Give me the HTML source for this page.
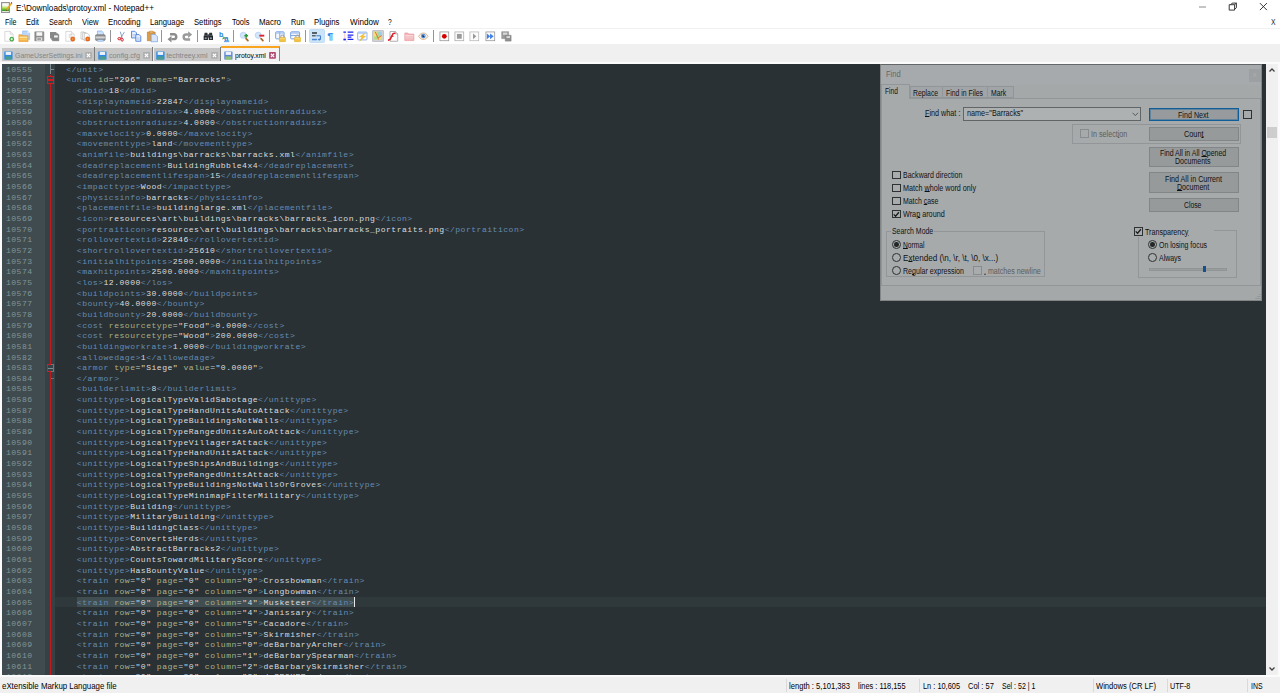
<!DOCTYPE html>
<html><head><meta charset="utf-8"><title>E:\Downloads\protoy.xml - Notepad++</title>
<style>
*{box-sizing:border-box;margin:0;padding:0}
html,body{width:1280px;height:693px;overflow:hidden;background:#f0f0f0;font-family:"Liberation Sans",sans-serif;font-size:8px;color:#000}
i{font-style:normal;display:block}
.T{position:absolute;line-height:10px;white-space:pre;font-family:"Liberation Sans",sans-serif}
.T u{text-decoration:underline;text-decoration-thickness:.7px;text-underline-offset:.2px}
.ic{position:absolute;overflow:visible}
.bx{position:absolute}
#titlebar{position:absolute;left:0;top:0;width:1280px;height:15px;background:#fff}
#menubar{position:absolute;left:0;top:15px;width:1280px;height:13px;background:#fff}
#toolbar{position:absolute;left:0;top:27.6px;width:1280px;height:16.8px;background:#fff;border-top:1px solid #f1f1f1}
.tsep{position:absolute;top:30.2px;width:1px;height:11.4px;background:#949494}
.tbhl{position:absolute}
.tab{position:absolute;top:47.8px;height:12.9px;background:#c6c6c6}
.tabsep{position:absolute;top:46.8px;width:1px;height:14.6px;background:#7c7c7c}
.atab{position:absolute;left:221.2px;top:46.3px;width:58.8px;height:15.2px;background:#f3f3f3;border-top:2.6px solid #faa51f;border-right:1.2px solid #8a8a8a}
#edframe{position:absolute;left:0;top:62px;width:1280px;height:615px;background:#fbfbfb}
#editor{position:absolute;left:2px;top:63.6px;width:1264px;height:611.2px;background:#293134;overflow:hidden}
#lnmargin{position:absolute;left:0;top:0;width:43.4px;height:100%;background:#3f4b4e}
#foldmargin{position:absolute;left:43.4px;top:0;width:9.8px;height:100%;background:#354144}
#nums{position:absolute;left:0;top:.4px;width:43px;font-family:"Liberation Mono",monospace;font-size:8.1px;letter-spacing:.4733px;line-height:10.6667px;color:#81969a}
#nums div{height:10.6667px;padding-left:3.9px;white-space:pre}
#code{position:absolute;left:53px;top:.4px;width:1211px;font-family:"Liberation Mono",monospace;font-size:8.1px;letter-spacing:.4733px;line-height:10.6667px;color:#e0e2e4}
#code .ln{height:10.6667px;padding-left:.5px;white-space:pre;position:relative}
#code .cur{background:#2f393c}
.t{color:#678cb1}.a{color:#adb083}.s{color:#d9dcde}.v{color:#d9dcde}.e{color:#c4c9cb}
.tx{position:relative;top:.8px}
.selbg{position:absolute;left:21.5px;top:0;width:277.3px;height:10.6667px;background:#404e52}
.caret{position:absolute;left:298.8px;top:0;width:1px;height:10.6667px;background:#e8e8e8}
.fm{position:absolute}
#vscroll{position:absolute;left:1265.8px;top:63.6px;width:12px;height:611.2px;background:#f0f0f0}
#vthumb{position:absolute;left:1.3px;top:63.2px;width:9.6px;height:10.8px;background:#cdcdcd}
#statusbar{position:absolute;left:0;top:677px;width:1280px;height:16px;background:#f0f0f0}
.ssep{position:absolute;top:679px;width:1px;height:13px;background:#d9d9d9}
#dlg{position:absolute;left:0;top:0;width:1280px;height:693px;opacity:.625}
</style></head><body>
<div id="titlebar">
<svg class="ic" style="left:0;top:0;width:13px;height:14px" viewBox="0 0 13 14"><defs><linearGradient id="g1" x1="0" y1="0" x2="0" y2="1"><stop offset="0" stop-color="#ffffff"/><stop offset=".32" stop-color="#f4f8ea"/><stop offset=".55" stop-color="#b4e04a"/><stop offset=".8" stop-color="#35a528"/><stop offset=".86" stop-color="#1f8f1c"/><stop offset=".9" stop-color="#f4f8f0"/><stop offset="1" stop-color="#ffffff"/></linearGradient></defs><rect x="1.6" y="2.6" width="7.8" height="9.8" fill="url(#g1)" stroke="#8e8e8e" stroke-width="1.1"/><path d="M10.9 2.9l1 .8-4.6 6.6-1.4.8.3-1.6z" fill="#f1a81c" stroke="#e0951a" stroke-width=".3"/><path d="M6.2 9.5l-.3 1.6 1.4-.8z" fill="#4a3a20"/><path d="M10.9 2.9l1 .8.5-.8-.9-.8z" fill="#9a0c10"/></svg>
<span class="T" style="left:15.70px;top:2px;line-height:12px;font-size:8.3px;color:#000;transform:scaleX(0.9886);transform-origin:0 50%;">E:\Downloads\protoy.xml - Notepad++</span>
<svg class="ic" style="left:1196px;top:0;width:80px;height:15px" viewBox="0 0 80 15"><path d="M3 7h7" stroke="#8a8a8a" stroke-width="1"/><path d="M33.2 4.7h5.4v5.4h-5.4zM34.8 4.7l1.4-1.6h4.2v4.6l-1.8 1.6M40.4 3.1l-1.8 1.6" fill="none" stroke="#222" stroke-width=".9"/><path d="M63.9 3.1l7 7M70.9 3.1l-7 7" stroke="#222" stroke-width=".9"/></svg>
</div>
<div id="menubar"></div>
<span class="T" style="left:5.10px;top:16px;line-height:12px;font-size:8.4px;color:#000;transform:scaleX(0.8444);transform-origin:0 50%;">File</span><span class="T" style="left:26.20px;top:16px;line-height:12px;font-size:8.4px;color:#000;transform:scaleX(0.8935);transform-origin:0 50%;">Edit</span><span class="T" style="left:48.85px;top:16px;line-height:12px;font-size:8.4px;color:#000;transform:scaleX(0.8720);transform-origin:0 50%;">Search</span><span class="T" style="left:81.60px;top:16px;line-height:12px;font-size:8.4px;color:#000;transform:scaleX(0.9159);transform-origin:0 50%;">View</span><span class="T" style="left:107.90px;top:16px;line-height:12px;font-size:8.4px;color:#000;transform:scaleX(0.9302);transform-origin:0 50%;">Encoding</span><span class="T" style="left:150.30px;top:16px;line-height:12px;font-size:8.4px;color:#000;transform:scaleX(0.9177);transform-origin:0 50%;">Language</span><span class="T" style="left:194.20px;top:16px;line-height:12px;font-size:8.4px;color:#000;transform:scaleX(0.9152);transform-origin:0 50%;">Settings</span><span class="T" style="left:231.80px;top:16px;line-height:12px;font-size:8.4px;color:#000;transform:scaleX(0.8895);transform-origin:0 50%;">Tools</span><span class="T" style="left:258.90px;top:16px;line-height:12px;font-size:8.4px;color:#000;transform:scaleX(0.9450);transform-origin:0 50%;">Macro</span><span class="T" style="left:290.90px;top:16px;line-height:12px;font-size:8.4px;color:#000;transform:scaleX(0.8846);transform-origin:0 50%;">Run</span><span class="T" style="left:314.40px;top:16px;line-height:12px;font-size:8.4px;color:#000;transform:scaleX(0.9283);transform-origin:0 50%;">Plugins</span><span class="T" style="left:350.00px;top:16px;line-height:12px;font-size:8.4px;color:#000;transform:scaleX(0.9665);transform-origin:0 50%;">Window</span><span class="T" style="left:387.90px;top:16px;line-height:12px;font-size:8.4px;color:#000;transform:scaleX(0.7920);transform-origin:0 50%;">?</span><span class="T" style="left:1270.80px;top:15px;line-height:13px;font-size:9.4px;color:#2a2a2a;transform:scaleX(.72);transform-origin:0 50%">X</span>
<div id="toolbar"></div>
<i class="tbhl" style="left:309.2px;top:28.8px;width:15.6px;height:14px;background:#cce4f7;border:1px solid #c2def5;border-radius:1.5px"></i><i class="tbhl" style="left:372.2px;top:30.1px;width:11.6px;height:11.5px;background:#d2d2d2;border:1px solid #c4c4d0;border-radius:1px"></i><svg class="ic" style="left:3.77px;top:30.60px;width:10.667px;height:10.667px" viewBox="0 0 16 16"><path d="M1.2 .6h8.3l4.3 4.3v10.5h-12.6z" fill="#fdfdfd" stroke="#c9c9c9" stroke-width="1"/><path d="M9.5 .6v4.3h4.3" fill="#f1f1f1" stroke="#c9c9c9" stroke-width=".8"/><circle cx="11.6" cy="12.2" r="3.1" fill="#3fae3a" stroke="#2c8a2a" stroke-width=".6"/><path d="M11.6 10.4v3.6M9.8 12.2h3.6" stroke="#fff" stroke-width="1.3"/></svg><svg class="ic" style="left:18.87px;top:30.60px;width:10.667px;height:10.667px" viewBox="0 0 16 16"><path d="M5.4 0h7.2l3.4 3.4v9.2h-10.6z" fill="#bcd6f8" stroke="#8ab4ee" stroke-width=".9"/><path d="M12.6 0v3.4h3.4" fill="#e6f0fc"/><path d="M-.2 5.6h4.6l1 1.6h8.2v8.6h-13.8z" fill="#f5b54a" stroke="#e8962a" stroke-width=".9"/><path d="M.8 9.4h11.8" stroke="#fde9a6" stroke-width="1.8"/><path d="M.8 12.2h11.8" stroke="#fbd36c" stroke-width="1.6"/></svg><svg class="ic" style="left:34.07px;top:30.60px;width:10.667px;height:10.667px" viewBox="0 0 16 16"><path d="M1.2 1.2h13.6v13.6h-13.6z" fill="#8e8e8e" stroke="#7c7c7c" stroke-width=".8"/><rect x="3.6" y="1.8" width="8.8" height="5.4" fill="#f6f6f6"/><rect x="3.6" y="9.6" width="8.8" height="5" fill="#e4e4e4"/><rect x="5" y="11" width="5.5" height="2.2" fill="#8e8e8e"/></svg><svg class="ic" style="left:49.27px;top:30.60px;width:10.667px;height:10.667px" viewBox="0 0 16 16"><path d="M1.5 1.5h9.5v9.5h-9.5z" fill="#8a8a8a"/><path d="M3.5 3.5h9.5v9.5h-9.5z" fill="#9a9a9a" stroke="#7a7a7a" stroke-width=".6"/><path d="M5.2 5.2h9.6v9.6h-9.6z" fill="#858585" stroke="#747474" stroke-width=".6"/><rect x="7.6" y="6.6" width="5.6" height="3.2" fill="#f4f4f4"/></svg><svg class="ic" style="left:64.67px;top:30.60px;width:10.667px;height:10.667px" viewBox="0 0 16 16"><path d="M1.2 .6h8.3l4.3 4.3v10.5h-12.6z" fill="#fdfdfd" stroke="#c9c9c9" stroke-width="1"/><path d="M9.5 .6v4.3h4.3" fill="#f1f1f1" stroke="#c9c9c9" stroke-width=".8"/><path d="M5.5 5.5h5M5.5 7.5h5M5.5 9.5h3" stroke="#c9c9c9" stroke-width="1"/><circle cx="11.6" cy="12" r="3.3" fill="#ea6a1b" stroke="#d4540f" stroke-width=".5"/><circle cx="11.6" cy="12" r="1.2" fill="#f6a86c"/></svg><svg class="ic" style="left:79.97px;top:30.60px;width:10.667px;height:10.667px" viewBox="0 0 16 16"><path d="M1.5 1.5h5l2.5 2.5v8h-7.5z" fill="#fdfdfd" stroke="#b0b0b0" stroke-width=".9"/><path d="M4 2.5h5l2.5 2.5v8h-7.5z" fill="#fdfdfd" stroke="#b0b0b0" stroke-width=".9"/><path d="M6.5 3.5h5l2.5 2.5v8.5h-7.5z" fill="#fdfdfd" stroke="#b0b0b0" stroke-width=".9"/><circle cx="11.6" cy="12" r="3.3" fill="#ea6a1b" stroke="#d4540f" stroke-width=".5"/><circle cx="11.6" cy="12" r="1.2" fill="#f6a86c"/></svg><svg class="ic" style="left:95.27px;top:30.60px;width:10.667px;height:10.667px" viewBox="0 0 16 16"><defs><linearGradient id="pg" x1="0" y1="0" x2="0" y2="1"><stop offset="0" stop-color="#6e6e6e"/><stop offset=".45" stop-color="#d8d8d8"/><stop offset="1" stop-color="#707070"/></linearGradient></defs><path d="M3.6 0h6.4l2.6 2.6v4h-9z" fill="#cfe2fa" stroke="#6fa0e6" stroke-width=".9"/><rect x=".6" y="5.6" width="14.8" height="8.6" rx="1.6" fill="url(#pg)" stroke="#6a6a6a" stroke-width=".7"/><path d="M3.8 13.4h8.6v2.4h-8.6z" fill="#cfe2fa" stroke="#7faae6" stroke-width=".7"/></svg><svg class="ic" style="left:115.87px;top:30.60px;width:10.667px;height:10.667px" viewBox="0 0 16 16"><path d="M6.4 1l2.6 8.4M12.6 1.4l-4.8 8" stroke="#8aa6cc" stroke-width="1.5" fill="none"/><ellipse cx="4.8" cy="11.6" rx="2" ry="1.7" fill="none" stroke="#d0222b" stroke-width="1.5"/><ellipse cx="9.2" cy="13.2" rx="1.8" ry="2" fill="none" stroke="#d0222b" stroke-width="1.5"/><path d="M6.4 10.6l1.8-1.4M9 11.2l-.4-1.8" stroke="#d0222b" stroke-width="1.3"/></svg><svg class="ic" style="left:131.07px;top:30.60px;width:10.667px;height:10.667px" viewBox="0 0 16 16"><path d="M0.8 0.4h5l2.5 2.5v7.5h-7.5z" fill="#e6effc" stroke="#3f77d8" stroke-width="1.25"/><path d="M2.4 5.4h4M2.4 7.4h4" stroke="#8fb2ec" stroke-width=".8"/><path d="M7.2 5.4h5l2.5 2.5v7.5h-7.5z" fill="#e6effc" stroke="#3f77d8" stroke-width="1.25"/><path d="M8.8 10.4h4M8.8 12.4h4" stroke="#8fb2ec" stroke-width=".8"/></svg><svg class="ic" style="left:146.87px;top:30.60px;width:10.667px;height:10.667px" viewBox="0 0 16 16"><path d="M.6 1.6h11.6v13h-11.6z" fill="#dc9c4c" stroke="#c07e2c" stroke-width="1"/><path d="M3.6 .2h5.6v2.8h-5.6z" fill="#f0c27c" stroke="#c07e2c" stroke-width=".8"/><path d="M6.2 5h6l3.6 3.6v7.6h-9.6z" fill="#d6e6fb" stroke="#6f9ce4" stroke-width="1"/></svg><svg class="ic" style="left:167.07px;top:30.60px;width:10.667px;height:10.667px" viewBox="0 0 16 16"><path d="M4.6 4.8h5.6a3.7 3.7 0 0 1 0 7.4h-3.6" fill="none" stroke="#8c8c8c" stroke-width="3.7"/><path d="M.8 12.2l6-5v10z" fill="#8c8c8c"/></svg><svg class="ic" style="left:182.47px;top:30.60px;width:10.667px;height:10.667px" viewBox="0 0 16 16"><path d="M9.6 5.4h-3.4a3.7 3.7 0 0 0 0 7.4h6" fill="none" stroke="#9a9a9a" stroke-width="3.7"/><path d="M15.2 5.4l-6-5v10z" fill="#9a9a9a"/></svg><svg class="ic" style="left:203.07px;top:30.60px;width:10.667px;height:10.667px" viewBox="0 0 16 16"><path d="M2.5 2.5h4l.8 4.5h-5.6z" fill="#2e3236"/><path d="M9.5 2.5h4l.8 4.5h-5.6z" fill="#2e3236"/><path d="M1 7h6.4v6.5h-6.4z" fill="#23272b"/><path d="M8.6 7h6.4v6.5h-6.4z" fill="#23272b"/><rect x="6.8" y="5" width="2.4" height="5" fill="#3b4046"/><rect x="2.6" y="9.6" width="3" height="2.6" fill="#8d949c"/><rect x="10.4" y="9.6" width="3" height="2.6" fill="#8d949c"/></svg><svg class="ic" style="left:218.57px;top:30.60px;width:10.667px;height:10.667px" viewBox="0 0 16 16"><text x="0" y="8.4" font-family="Liberation Sans,sans-serif" font-weight="bold" font-size="10.5" fill="#2f7de0">b</text><text x="8" y="15.2" font-family="Liberation Sans,sans-serif" font-weight="bold" font-size="11.5" fill="#2f7de0">a</text><path d="M5.5 8.4l3 2-3.5 1.8" fill="none" stroke="#3aa04a" stroke-width="1.6"/><path d="M7.5 16h8" stroke="#2f7de0" stroke-width="1.2"/></svg><svg class="ic" style="left:239.27px;top:30.60px;width:10.667px;height:10.667px" viewBox="0 0 16 16"><circle cx="6.4" cy="6.4" r="4.6" fill="#d4e6fa" stroke="#a9c8ee" stroke-width="1"/><path d="M10.6 11.4l2.8 3" stroke="#a8682c" stroke-width="2.6" stroke-linecap="round"/><path d="M10.8 4.4v5.6M8 7.2h5.6" stroke="#2e9c35" stroke-width="2.4"/></svg><svg class="ic" style="left:254.47px;top:30.60px;width:10.667px;height:10.667px" viewBox="0 0 16 16"><circle cx="6.4" cy="6.4" r="4.6" fill="#d4e6fa" stroke="#a9c8ee" stroke-width="1"/><path d="M10.6 11.4l2.8 3" stroke="#a8682c" stroke-width="2.6" stroke-linecap="round"/><path d="M8 7h7.4" stroke="#e0202a" stroke-width="2.8"/></svg><svg class="ic" style="left:275.27px;top:30.60px;width:10.667px;height:10.667px" viewBox="0 0 16 16"><rect x="1" y="1.2" width="12.6" height="10.6" rx="1.2" fill="#f4f8fe" stroke="#6f9be2" stroke-width="1.4"/><path d="M7.2 1.5v10" stroke="#6f9be2" stroke-width="1.3"/><path d="M1.5 3h11.6" stroke="#9dbcee" stroke-width="1.6"/><path d="M8.8 10v-1.6a2.4 2.4 0 0 1 4.8 0v1.6" fill="none" stroke="#a4a4a4" stroke-width="1.6"/><rect x="6.6" y="9.6" width="9.2" height="6.4" rx=".8" fill="#f2c23e" stroke="#dfaa28" stroke-width=".8"/><path d="M7.2 11.6h8" stroke="#fbe08a" stroke-width="1.2"/></svg><svg class="ic" style="left:290.47px;top:30.60px;width:10.667px;height:10.667px" viewBox="0 0 16 16"><rect x="1" y="1.2" width="13.4" height="10.6" rx="1.2" fill="#f4f8fe" stroke="#6f9be2" stroke-width="1.4"/><path d="M1.5 6.8h12.6" stroke="#6f9be2" stroke-width="1.3"/><path d="M1.5 3h12.4" stroke="#9dbcee" stroke-width="1.8"/><path d="M8.8 10v-1.6a2.4 2.4 0 0 1 4.8 0v1.6" fill="none" stroke="#a4a4a4" stroke-width="1.6"/><rect x="6.6" y="9.6" width="9.2" height="6.4" rx=".8" fill="#f2c23e" stroke="#dfaa28" stroke-width=".8"/><path d="M7.2 11.6h8" stroke="#fbe08a" stroke-width="1.2"/></svg><svg class="ic" style="left:311.47px;top:31.40px;width:10.667px;height:10.667px" viewBox="0 0 16 16"><path d="M1.5 3h7.5" stroke="#2a2f36" stroke-width="2.2"/><path d="M1.5 7.2h5.5" stroke="#2a2f36" stroke-width="1.6"/><path d="M8 7.2h6.2v5.6h-2.4" fill="none" stroke="#3f78c8" stroke-width="1.5"/><path d="M12.8 10.6l-2.6 2.2 2.6 2.2z" fill="#3f78c8"/><path d="M1.5 12.8h7.5" stroke="#4a86d8" stroke-width="2.2"/></svg><svg class="ic" style="left:326.27px;top:30.60px;width:10.667px;height:10.667px" viewBox="0 0 16 16"><text x="1.6" y="11.8" font-family="Liberation Sans,sans-serif" font-weight="bold" font-size="13.5" fill="#3a86ea" transform="scale(1.2 1)">¶</text></svg><svg class="ic" style="left:342.57px;top:30.60px;width:10.667px;height:10.667px" viewBox="0 0 16 16"><path d="M2.6 3.2v8" stroke="#f8baba" stroke-width="1.2"/><path d="M.6 1.8h3.8M7 1.8h8.6M7 6.3h8.6M7 9.3h5.6M7 12.6h8.6" stroke="#1c22f2" stroke-width="1.8"/><path d="M.6 12.8h3.8" stroke="#1c22f2" stroke-width="2.6"/><path d="M4.6 15.6h2" stroke="#b8bcf8" stroke-width="1"/></svg><svg class="ic" style="left:356.87px;top:30.60px;width:10.667px;height:10.667px" viewBox="0 0 16 16"><rect x="1" y="1.6" width="14" height="11.8" rx="1.2" fill="#fafcff" stroke="#6a9ae6" stroke-width="1.1"/><path d="M1.5 3.2h13" stroke="#a8c6f2" stroke-width="1.8"/><path d="M11.6 3.6l-8 5.2h4l-3.4 6.4 9-7.4h-4.2z" fill="#f2c230" stroke="#e4ae20" stroke-width=".5"/></svg><svg class="ic" style="left:373.30px;top:31.10px;width:9.400px;height:9.400px" viewBox="0 0 16 16"><rect x="1.4" y="1.4" width="13.2" height="13.2" fill="#b4dc84"/><path d="M1.4 1.4h5l-1 7-4 2z" fill="#f3e07a"/><path d="M9 1.4h5.6v6l-4.6 1z" fill="#9ccdf0"/><path d="M9 10l5.6-1v5.6h-7z" fill="#f0dc7c"/><path d="M3.6 1.4l3 6 3 7.2M14.6 8l-5.6 3.4" fill="none" stroke="#ea5a34" stroke-width="1.5"/></svg><svg class="ic" style="left:388.27px;top:30.60px;width:10.667px;height:10.667px" viewBox="0 0 16 16"><path d="M3 .8h8l3.6 3.6v11h-11.6z" fill="#fff" stroke="#a2a2a2" stroke-width="1.3"/><path d="M11 .8v3.6h3.6" fill="#ececec" stroke="#8c8c8c" stroke-width="1"/><path d="M1 13.6l2.2-1 4.2-8.4 2.4-.8" fill="none" stroke="#e0212b" stroke-width="2.4" stroke-linecap="round"/><path d="M4.2 8h4" stroke="#e0212b" stroke-width="1.5"/><path d="M12 8.5v1M12 11.5v1" stroke="#c8c8c8" stroke-width="1"/></svg><svg class="ic" style="left:403.57px;top:30.60px;width:10.667px;height:10.667px" viewBox="0 0 16 16"><path d="M1.2 3h4.6l1.2 1.6h7.8v9.8h-13.6z" fill="#f3b9bd" stroke="#e58f96" stroke-width=".9"/><path d="M1.8 7.2h12.4" stroke="#fbe3e4" stroke-width="1.4"/><path d="M1.8 10.4h12.4" stroke="#f7cfd2" stroke-width="1.2"/></svg><svg class="ic" style="left:418.47px;top:30.60px;width:10.667px;height:10.667px" viewBox="0 0 16 16"><path d="M.8 8c2.2-3.6 4.6-5 7.2-5s5 1.4 7.2 5c-2.2 3.4-4.6 4.8-7.2 4.8s-5-1.4-7.2-4.8z" fill="#f4f1ec" stroke="#d8a068" stroke-width="1.1"/><circle cx="8" cy="7.6" r="3.5" fill="#5a93d8"/><circle cx="8" cy="7.6" r="1.6" fill="#1d2f52"/><circle cx="9.2" cy="6.4" r=".8" fill="#e8f0fb"/></svg><svg class="ic" style="left:439.07px;top:30.60px;width:10.667px;height:10.667px" viewBox="0 0 16 16"><rect x="1.4" y="1.4" width="13.2" height="13.2" fill="#fbfbfb" stroke="#8f8f8f" stroke-width="1.1"/><circle cx="8" cy="8" r="3.6" fill="#d40000"/></svg><svg class="ic" style="left:454.07px;top:30.60px;width:10.667px;height:10.667px" viewBox="0 0 16 16"><rect x="1.4" y="1.4" width="13.2" height="13.2" fill="#fbfbfb" stroke="#a8a8a8" stroke-width="1.1"/><rect x="4.4" y="4.4" width="7.2" height="7.2" fill="#9a9a9a"/></svg><svg class="ic" style="left:469.47px;top:30.60px;width:10.667px;height:10.667px" viewBox="0 0 16 16"><rect x="1.4" y="1.4" width="13.2" height="13.2" fill="#fbfbfb" stroke="#b4b4b4" stroke-width="1.1"/><path d="M6 3.6l5 4.4-5 4.4z" fill="#999"/></svg><svg class="ic" style="left:484.97px;top:30.60px;width:10.667px;height:10.667px" viewBox="0 0 16 16"><rect x="1.4" y="1.4" width="13.2" height="13.2" fill="#fbfbfb" stroke="#8f8f8f" stroke-width="1.1"/><path d="M2.8 3.8l5 4.2-5 4.2z" fill="#3f7fe6"/><path d="M7.6 3.8l5.4 4.2-5.4 4.2z" fill="#3f7fe6"/></svg><svg class="ic" style="left:500.57px;top:30.60px;width:10.667px;height:10.667px" viewBox="0 0 16 16"><path d="M1 1h10.5v10.5h-10.5z" fill="#9b9b9b" stroke="#858585" stroke-width=".7"/><rect x="3" y="2.4" width="6.4" height="3.4" fill="#d6d6d6"/><path d="M6.4 6.4h8.8v8.8h-8.8z" fill="#8f8f8f" stroke="#7b7b7b" stroke-width=".7"/><rect x="8.4" y="7.4" width="5" height="3" fill="#e6e6e6"/><path d="M9.5 8.6l1.6-1 1.4 1" stroke="#8f8f8f" stroke-width="1" fill="none"/></svg><i class="tsep" style="left:109.90px"></i><i class="tsep" style="left:160.90px"></i><i class="tsep" style="left:196.90px"></i><i class="tsep" style="left:232.90px"></i><i class="tsep" style="left:268.80px"></i><i class="tsep" style="left:304.90px"></i><i class="tsep" style="left:432.90px"></i>
<i class="tab" style="left:2.00px;width:92.30px"></i><i class="tabsep" style="left:94.10px"></i><svg class="ic" style="left:4.00px;top:50.5px;width:8.8px;height:9px" viewBox="0 0 16 16"><rect x=".5" y=".5" width="15" height="15" rx="1" fill="#2e8ae6"/><rect x="3" y="1.4" width="10" height="5.6" fill="#e9f2fc"/><rect x="2.4" y="9.6" width="11.2" height="6" fill="#4a9d92"/></svg><span class="T" style="left:14.60px;top:51px;line-height:9px;font-size:7px;color:#858585;transform:scaleX(0.9913);transform-origin:0 50%;">GameUserSettings.ini</span><svg class="ic" style="left:85.00px;top:51.8px;width:7px;height:6.8px" viewBox="0 0 14 14"><rect width="14" height="14" rx="1.5" fill="#aeaeae"/><path d="M3.6 3.6l6.8 6.8M10.4 3.6l-6.8 6.8" stroke="#fff" stroke-width="2.2"/></svg><i class="tab" style="left:95.20px;width:57.30px"></i><i class="tabsep" style="left:152.30px"></i><svg class="ic" style="left:98.00px;top:50.5px;width:8.8px;height:9px" viewBox="0 0 16 16"><rect x=".5" y=".5" width="15" height="15" rx="1" fill="#2e8ae6"/><rect x="3" y="1.4" width="10" height="5.6" fill="#e9f2fc"/><rect x="2.4" y="9.6" width="11.2" height="6" fill="#4a9d92"/></svg><span class="T" style="left:108.70px;top:51px;line-height:9px;font-size:7px;color:#858585;transform:scaleX(1.0311);transform-origin:0 50%;">config.cfg</span><svg class="ic" style="left:143.00px;top:51.8px;width:7px;height:6.8px" viewBox="0 0 14 14"><rect width="14" height="14" rx="1.5" fill="#aeaeae"/><path d="M3.6 3.6l6.8 6.8M10.4 3.6l-6.8 6.8" stroke="#fff" stroke-width="2.2"/></svg><i class="tab" style="left:153.50px;width:66.70px"></i><i class="tabsep" style="left:220.00px"></i><svg class="ic" style="left:155.90px;top:50.5px;width:8.8px;height:9px" viewBox="0 0 16 16"><rect x=".5" y=".5" width="15" height="15" rx="1" fill="#2e8ae6"/><rect x="3" y="1.4" width="10" height="5.6" fill="#e9f2fc"/><rect x="2.4" y="9.6" width="11.2" height="6" fill="#4a9d92"/></svg><span class="T" style="left:166.40px;top:51px;line-height:9px;font-size:7px;color:#858585;">techtreey.xml</span><svg class="ic" style="left:211.00px;top:51.8px;width:7px;height:6.8px" viewBox="0 0 14 14"><rect width="14" height="14" rx="1.5" fill="#aeaeae"/><path d="M3.6 3.6l6.8 6.8M10.4 3.6l-6.8 6.8" stroke="#fff" stroke-width="2.2"/></svg><i class="atab"></i><svg class="ic" style="left:224.00px;top:50.5px;width:8.8px;height:9px" viewBox="0 0 16 16"><rect x=".5" y=".5" width="15" height="15" rx="1" fill="#5f86d8"/><rect x="3" y="1.4" width="10" height="5.6" fill="#e9f2fc"/><rect x="2.4" y="9.6" width="11.2" height="6" fill="#8fc07a"/></svg><span class="T" style="left:234.50px;top:51px;line-height:9px;font-size:7px;color:#000;transform:scaleX(0.9723);transform-origin:0 50%;">protoy.xml</span><svg class="ic" style="left:268.70px;top:51.8px;width:7px;height:6.8px" viewBox="0 0 14 14"><rect width="14" height="14" rx="1.5" fill="#b04a72"/><path d="M3.6 3.6l6.8 6.8M10.4 3.6l-6.8 6.8" stroke="#fff" stroke-width="2.2"/></svg>
<div id="edframe"></div>
<div id="editor">
<div id="lnmargin"></div><div id="foldmargin"></div>
<i class="fm" style="left:48px;top:11px;width:1.2px;height:601px;background:#c01a1c"></i>
<i class="fm" style="left:48px;top:0;width:1.2px;height:10px;background:#7c8c90"></i>
<i class="fm" style="left:48px;top:5.4px;width:3.6px;height:1px;background:#7c8c90"></i>
<i class="fm" style="left:44.6px;top:12.6px;width:7.8px;height:7.6px;border:1.3px solid #d21c22;background:#364145"></i>
<i class="fm" style="left:46.4px;top:15.9px;width:4.2px;height:1.1px;background:#d21c22"></i>
<i class="fm" style="left:44.6px;top:300.6px;width:7.8px;height:7.8px;border:1.2px solid #6a7a7e;border-left-color:#d21c22;background:#364145"></i>
<i class="fm" style="left:44.6px;top:300.6px;width:4px;height:1.2px;background:#d21c22"></i>
<i class="fm" style="left:44.6px;top:307.2px;width:4px;height:1.2px;background:#d21c22"></i>
<i class="fm" style="left:46.4px;top:304px;width:4.2px;height:1.1px;background:#7c8c90"></i>
<i class="fm" style="left:49.2px;top:314.6px;width:3px;height:1px;background:#64747a"></i>
<div id="nums">
<div><span class="tx">10555</span></div>
<div><span class="tx">10556</span></div>
<div><span class="tx">10557</span></div>
<div><span class="tx">10558</span></div>
<div><span class="tx">10559</span></div>
<div><span class="tx">10560</span></div>
<div><span class="tx">10561</span></div>
<div><span class="tx">10562</span></div>
<div><span class="tx">10563</span></div>
<div><span class="tx">10564</span></div>
<div><span class="tx">10565</span></div>
<div><span class="tx">10566</span></div>
<div><span class="tx">10567</span></div>
<div><span class="tx">10568</span></div>
<div><span class="tx">10569</span></div>
<div><span class="tx">10570</span></div>
<div><span class="tx">10571</span></div>
<div><span class="tx">10572</span></div>
<div><span class="tx">10573</span></div>
<div><span class="tx">10574</span></div>
<div><span class="tx">10575</span></div>
<div><span class="tx">10576</span></div>
<div><span class="tx">10577</span></div>
<div><span class="tx">10578</span></div>
<div><span class="tx">10579</span></div>
<div><span class="tx">10580</span></div>
<div><span class="tx">10581</span></div>
<div><span class="tx">10582</span></div>
<div><span class="tx">10583</span></div>
<div><span class="tx">10584</span></div>
<div><span class="tx">10585</span></div>
<div><span class="tx">10586</span></div>
<div><span class="tx">10587</span></div>
<div><span class="tx">10588</span></div>
<div><span class="tx">10589</span></div>
<div><span class="tx">10590</span></div>
<div><span class="tx">10591</span></div>
<div><span class="tx">10592</span></div>
<div><span class="tx">10593</span></div>
<div><span class="tx">10594</span></div>
<div><span class="tx">10595</span></div>
<div><span class="tx">10596</span></div>
<div><span class="tx">10597</span></div>
<div><span class="tx">10598</span></div>
<div><span class="tx">10599</span></div>
<div><span class="tx">10600</span></div>
<div><span class="tx">10601</span></div>
<div><span class="tx">10602</span></div>
<div><span class="tx">10603</span></div>
<div><span class="tx">10604</span></div>
<div><span class="tx">10605</span></div>
<div><span class="tx">10606</span></div>
<div><span class="tx">10607</span></div>
<div><span class="tx">10608</span></div>
<div><span class="tx">10609</span></div>
<div><span class="tx">10610</span></div>
<div><span class="tx">10611</span></div>
<div><span class="tx">10612</span></div>
</div>
<div id="code">
<div class="ln"><span class="tx">  <span class="t">&lt;/unit&gt;</span></span></div>
<div class="ln"><span class="tx">  <span class="t">&lt;unit</span> <span class="a">id</span><span class="e">=</span><span class="s">"296"</span> <span class="a">name</span><span class="e">=</span><span class="s">"Barracks"</span><span class="t">&gt;</span></span></div>
<div class="ln"><span class="tx">    <span class="t">&lt;dbid&gt;</span><span class="v">18</span><span class="t">&lt;/dbid&gt;</span></span></div>
<div class="ln"><span class="tx">    <span class="t">&lt;displaynameid&gt;</span><span class="v">22847</span><span class="t">&lt;/displaynameid&gt;</span></span></div>
<div class="ln"><span class="tx">    <span class="t">&lt;obstructionradiusx&gt;</span><span class="v">4.0000</span><span class="t">&lt;/obstructionradiusx&gt;</span></span></div>
<div class="ln"><span class="tx">    <span class="t">&lt;obstructionradiusz&gt;</span><span class="v">4.0000</span><span class="t">&lt;/obstructionradiusz&gt;</span></span></div>
<div class="ln"><span class="tx">    <span class="t">&lt;maxvelocity&gt;</span><span class="v">0.0000</span><span class="t">&lt;/maxvelocity&gt;</span></span></div>
<div class="ln"><span class="tx">    <span class="t">&lt;movementtype&gt;</span><span class="v">land</span><span class="t">&lt;/movementtype&gt;</span></span></div>
<div class="ln"><span class="tx">    <span class="t">&lt;animfile&gt;</span><span class="v">buildings\barracks\barracks.xml</span><span class="t">&lt;/animfile&gt;</span></span></div>
<div class="ln"><span class="tx">    <span class="t">&lt;deadreplacement&gt;</span><span class="v">BuildingRubble4x4</span><span class="t">&lt;/deadreplacement&gt;</span></span></div>
<div class="ln"><span class="tx">    <span class="t">&lt;deadreplacementlifespan&gt;</span><span class="v">15</span><span class="t">&lt;/deadreplacementlifespan&gt;</span></span></div>
<div class="ln"><span class="tx">    <span class="t">&lt;impacttype&gt;</span><span class="v">Wood</span><span class="t">&lt;/impacttype&gt;</span></span></div>
<div class="ln"><span class="tx">    <span class="t">&lt;physicsinfo&gt;</span><span class="v">barracks</span><span class="t">&lt;/physicsinfo&gt;</span></span></div>
<div class="ln"><span class="tx">    <span class="t">&lt;placementfile&gt;</span><span class="v">buildinglarge.xml</span><span class="t">&lt;/placementfile&gt;</span></span></div>
<div class="ln"><span class="tx">    <span class="t">&lt;icon&gt;</span><span class="v">resources\art\buildings\barracks\barracks_icon.png</span><span class="t">&lt;/icon&gt;</span></span></div>
<div class="ln"><span class="tx">    <span class="t">&lt;portraiticon&gt;</span><span class="v">resources\art\buildings\barracks\barracks_portraits.png</span><span class="t">&lt;/portraiticon&gt;</span></span></div>
<div class="ln"><span class="tx">    <span class="t">&lt;rollovertextid&gt;</span><span class="v">22846</span><span class="t">&lt;/rollovertextid&gt;</span></span></div>
<div class="ln"><span class="tx">    <span class="t">&lt;shortrollovertextid&gt;</span><span class="v">25610</span><span class="t">&lt;/shortrollovertextid&gt;</span></span></div>
<div class="ln"><span class="tx">    <span class="t">&lt;initialhitpoints&gt;</span><span class="v">2500.0000</span><span class="t">&lt;/initialhitpoints&gt;</span></span></div>
<div class="ln"><span class="tx">    <span class="t">&lt;maxhitpoints&gt;</span><span class="v">2500.0000</span><span class="t">&lt;/maxhitpoints&gt;</span></span></div>
<div class="ln"><span class="tx">    <span class="t">&lt;los&gt;</span><span class="v">12.0000</span><span class="t">&lt;/los&gt;</span></span></div>
<div class="ln"><span class="tx">    <span class="t">&lt;buildpoints&gt;</span><span class="v">30.0000</span><span class="t">&lt;/buildpoints&gt;</span></span></div>
<div class="ln"><span class="tx">    <span class="t">&lt;bounty&gt;</span><span class="v">40.0000</span><span class="t">&lt;/bounty&gt;</span></span></div>
<div class="ln"><span class="tx">    <span class="t">&lt;buildbounty&gt;</span><span class="v">20.0000</span><span class="t">&lt;/buildbounty&gt;</span></span></div>
<div class="ln"><span class="tx">    <span class="t">&lt;cost</span> <span class="a">resourcetype</span><span class="e">=</span><span class="s">"Food"</span><span class="t">&gt;</span><span class="v">0.0000</span><span class="t">&lt;/cost&gt;</span></span></div>
<div class="ln"><span class="tx">    <span class="t">&lt;cost</span> <span class="a">resourcetype</span><span class="e">=</span><span class="s">"Wood"</span><span class="t">&gt;</span><span class="v">200.0000</span><span class="t">&lt;/cost&gt;</span></span></div>
<div class="ln"><span class="tx">    <span class="t">&lt;buildingworkrate&gt;</span><span class="v">1.0000</span><span class="t">&lt;/buildingworkrate&gt;</span></span></div>
<div class="ln"><span class="tx">    <span class="t">&lt;allowedage&gt;</span><span class="v">1</span><span class="t">&lt;/allowedage&gt;</span></span></div>
<div class="ln"><span class="tx">    <span class="t">&lt;armor</span> <span class="a">type</span><span class="e">=</span><span class="s">"Siege"</span> <span class="a">value</span><span class="e">=</span><span class="s">"0.0000"</span><span class="t">&gt;</span></span></div>
<div class="ln"><span class="tx">    <span class="t">&lt;/armor&gt;</span></span></div>
<div class="ln"><span class="tx">    <span class="t">&lt;builderlimit&gt;</span><span class="v">8</span><span class="t">&lt;/builderlimit&gt;</span></span></div>
<div class="ln"><span class="tx">    <span class="t">&lt;unittype&gt;</span><span class="v">LogicalTypeValidSabotage</span><span class="t">&lt;/unittype&gt;</span></span></div>
<div class="ln"><span class="tx">    <span class="t">&lt;unittype&gt;</span><span class="v">LogicalTypeHandUnitsAutoAttack</span><span class="t">&lt;/unittype&gt;</span></span></div>
<div class="ln"><span class="tx">    <span class="t">&lt;unittype&gt;</span><span class="v">LogicalTypeBuildingsNotWalls</span><span class="t">&lt;/unittype&gt;</span></span></div>
<div class="ln"><span class="tx">    <span class="t">&lt;unittype&gt;</span><span class="v">LogicalTypeRangedUnitsAutoAttack</span><span class="t">&lt;/unittype&gt;</span></span></div>
<div class="ln"><span class="tx">    <span class="t">&lt;unittype&gt;</span><span class="v">LogicalTypeVillagersAttack</span><span class="t">&lt;/unittype&gt;</span></span></div>
<div class="ln"><span class="tx">    <span class="t">&lt;unittype&gt;</span><span class="v">LogicalTypeHandUnitsAttack</span><span class="t">&lt;/unittype&gt;</span></span></div>
<div class="ln"><span class="tx">    <span class="t">&lt;unittype&gt;</span><span class="v">LogicalTypeShipsAndBuildings</span><span class="t">&lt;/unittype&gt;</span></span></div>
<div class="ln"><span class="tx">    <span class="t">&lt;unittype&gt;</span><span class="v">LogicalTypeRangedUnitsAttack</span><span class="t">&lt;/unittype&gt;</span></span></div>
<div class="ln"><span class="tx">    <span class="t">&lt;unittype&gt;</span><span class="v">LogicalTypeBuildingsNotWallsOrGroves</span><span class="t">&lt;/unittype&gt;</span></span></div>
<div class="ln"><span class="tx">    <span class="t">&lt;unittype&gt;</span><span class="v">LogicalTypeMinimapFilterMilitary</span><span class="t">&lt;/unittype&gt;</span></span></div>
<div class="ln"><span class="tx">    <span class="t">&lt;unittype&gt;</span><span class="v">Building</span><span class="t">&lt;/unittype&gt;</span></span></div>
<div class="ln"><span class="tx">    <span class="t">&lt;unittype&gt;</span><span class="v">MilitaryBuilding</span><span class="t">&lt;/unittype&gt;</span></span></div>
<div class="ln"><span class="tx">    <span class="t">&lt;unittype&gt;</span><span class="v">BuildingClass</span><span class="t">&lt;/unittype&gt;</span></span></div>
<div class="ln"><span class="tx">    <span class="t">&lt;unittype&gt;</span><span class="v">ConvertsHerds</span><span class="t">&lt;/unittype&gt;</span></span></div>
<div class="ln"><span class="tx">    <span class="t">&lt;unittype&gt;</span><span class="v">AbstractBarracks2</span><span class="t">&lt;/unittype&gt;</span></span></div>
<div class="ln"><span class="tx">    <span class="t">&lt;unittype&gt;</span><span class="v">CountsTowardMilitaryScore</span><span class="t">&lt;/unittype&gt;</span></span></div>
<div class="ln"><span class="tx">    <span class="t">&lt;unittype&gt;</span><span class="v">HasBountyValue</span><span class="t">&lt;/unittype&gt;</span></span></div>
<div class="ln"><span class="tx">    <span class="t">&lt;train</span> <span class="a">row</span><span class="e">=</span><span class="s">"0"</span> <span class="a">page</span><span class="e">=</span><span class="s">"0"</span> <span class="a">column</span><span class="e">=</span><span class="s">"0"</span><span class="t">&gt;</span><span class="v">Crossbowman</span><span class="t">&lt;/train&gt;</span></span></div>
<div class="ln"><span class="tx">    <span class="t">&lt;train</span> <span class="a">row</span><span class="e">=</span><span class="s">"0"</span> <span class="a">page</span><span class="e">=</span><span class="s">"0"</span> <span class="a">column</span><span class="e">=</span><span class="s">"0"</span><span class="t">&gt;</span><span class="v">Longbowman</span><span class="t">&lt;/train&gt;</span></span></div>
<div class="ln cur"><i class="selbg"></i><i class="caret"></i><span class="tx">    <span class="t">&lt;train</span> <span class="a">row</span><span class="e">=</span><span class="s">"0"</span> <span class="a">page</span><span class="e">=</span><span class="s">"0"</span> <span class="a">column</span><span class="e">=</span><span class="s">"4"</span><span class="t">&gt;</span><span class="v">Musketeer</span><span class="t">&lt;/train&gt;</span></span></div>
<div class="ln"><span class="tx">    <span class="t">&lt;train</span> <span class="a">row</span><span class="e">=</span><span class="s">"0"</span> <span class="a">page</span><span class="e">=</span><span class="s">"0"</span> <span class="a">column</span><span class="e">=</span><span class="s">"4"</span><span class="t">&gt;</span><span class="v">Janissary</span><span class="t">&lt;/train&gt;</span></span></div>
<div class="ln"><span class="tx">    <span class="t">&lt;train</span> <span class="a">row</span><span class="e">=</span><span class="s">"0"</span> <span class="a">page</span><span class="e">=</span><span class="s">"0"</span> <span class="a">column</span><span class="e">=</span><span class="s">"5"</span><span class="t">&gt;</span><span class="v">Cacadore</span><span class="t">&lt;/train&gt;</span></span></div>
<div class="ln"><span class="tx">    <span class="t">&lt;train</span> <span class="a">row</span><span class="e">=</span><span class="s">"0"</span> <span class="a">page</span><span class="e">=</span><span class="s">"0"</span> <span class="a">column</span><span class="e">=</span><span class="s">"5"</span><span class="t">&gt;</span><span class="v">Skirmisher</span><span class="t">&lt;/train&gt;</span></span></div>
<div class="ln"><span class="tx">    <span class="t">&lt;train</span> <span class="a">row</span><span class="e">=</span><span class="s">"0"</span> <span class="a">page</span><span class="e">=</span><span class="s">"0"</span> <span class="a">column</span><span class="e">=</span><span class="s">"0"</span><span class="t">&gt;</span><span class="v">deBarbaryArcher</span><span class="t">&lt;/train&gt;</span></span></div>
<div class="ln"><span class="tx">    <span class="t">&lt;train</span> <span class="a">row</span><span class="e">=</span><span class="s">"0"</span> <span class="a">page</span><span class="e">=</span><span class="s">"0"</span> <span class="a">column</span><span class="e">=</span><span class="s">"1"</span><span class="t">&gt;</span><span class="v">deBarbarySpearman</span><span class="t">&lt;/train&gt;</span></span></div>
<div class="ln"><span class="tx">    <span class="t">&lt;train</span> <span class="a">row</span><span class="e">=</span><span class="s">"0"</span> <span class="a">page</span><span class="e">=</span><span class="s">"0"</span> <span class="a">column</span><span class="e">=</span><span class="s">"2"</span><span class="t">&gt;</span><span class="v">deBarbarySkirmisher</span><span class="t">&lt;/train&gt;</span></span></div>
<div class="ln"><span class="tx">    <span class="t">&lt;train</span> <span class="a">row</span><span class="e">=</span><span class="s">"0"</span> <span class="a">page</span><span class="e">=</span><span class="s">"0"</span> <span class="a">column</span><span class="e">=</span><span class="s">"3"</span><span class="t">&gt;</span><span class="v">deSPCXPPandour</span><span class="t">&lt;/train&gt;</span></span></div>
</div>
</div>
<div id="vscroll"><i id="vthumb"></i>
<svg class="ic" style="left:2.8px;top:4.2px;width:6px;height:4px" viewBox="0 0 12 8"><path d="M1 7l5-5 5 5" fill="none" stroke="#404040" stroke-width="2.6"/></svg>
<svg class="ic" style="left:2.8px;top:603px;width:6px;height:4px" viewBox="0 0 12 8"><path d="M1 1l5 5 5-5" fill="none" stroke="#404040" stroke-width="2.6"/></svg>
</div>
<div id="dlg">
<i class="bx" style="left:880.00px;top:64.00px;width:382.00px;height:237.00px;background:#f0f0f0;border:1px solid #b8b8b8;border-top-color:#888"></i><i class="bx" style="left:881.00px;top:65.00px;width:380.00px;height:20.00px;background:#f4f4f4"></i><span class="T" style="left:885.90px;top:69px;line-height:11px;font-size:8.2px;color:#8a8a8a;transform:scaleX(0.9224);transform-origin:0 50%;">Find</span><i class="bx" style="left:1248.80px;top:69.40px;width:12.20px;height:12.20px;background:#e4e4e4"></i><span class="T" style="left:1253.30px;top:70px;line-height:9px;font-size:6.5px;color:#fafafa;">x</span><i class="bx" style="left:880.60px;top:98.00px;width:380.40px;height:188.00px;background:#f3f3f3;border:1px solid #d4d4d4"></i><i class="bx" style="left:910.00px;top:86.20px;width:32.60px;height:12.20px;background:#ececec;border:1px solid #d4d4d4"></i><i class="bx" style="left:942.00px;top:86.20px;width:45.50px;height:12.20px;background:#ececec;border:1px solid #d4d4d4"></i><i class="bx" style="left:987.00px;top:86.20px;width:26.60px;height:12.20px;background:#ececec;border:1px solid #d4d4d4"></i><i class="bx" style="left:880.60px;top:84.40px;width:29.80px;height:15.00px;background:#f3f3f3;border:1px solid #d4d4d4;border-bottom:none"></i><span class="T" style="left:885.10px;top:85px;line-height:12px;font-size:8.4px;color:#000;transform:scaleX(0.7916);transform-origin:0 50%;">Find</span><span class="T" style="left:912.90px;top:87px;line-height:12px;font-size:8.4px;color:#000;transform:scaleX(0.8199);transform-origin:0 50%;">Replace</span><span class="T" style="left:946.10px;top:87px;line-height:12px;font-size:8.4px;color:#000;transform:scaleX(0.8194);transform-origin:0 50%;">Find in Files</span><span class="T" style="left:990.90px;top:87px;line-height:12px;font-size:8.4px;color:#000;transform:scaleX(0.8161);transform-origin:0 50%;">Mark</span><span class="T" style="left:925.10px;top:107px;line-height:12px;font-size:8.4px;color:#000;transform:scaleX(0.8641);transform-origin:0 50%;"><u>F</u>ind what :</span><i class="bx" style="left:963.20px;top:106.60px;width:177.80px;height:14.00px;background:#fff;border:1px solid #858585"></i><span class="T" style="left:967.10px;top:107px;line-height:12px;font-size:8.4px;color:#000;transform:scaleX(0.8636);transform-origin:0 50%;">name="Barracks"</span><svg class="ic" style="left:1131.6px;top:111.6px;width:6.6px;height:4.4px" viewBox="0 0 12 8"><path d="M1 1.5l5 5 5-5" fill="none" stroke="#444" stroke-width="1.4"/></svg><i class="bx" style="left:1148.80px;top:107.50px;width:89.90px;height:13.50px;background:#dcdcdc;border:1px solid #0078d7;box-shadow:inset 0 0 0 1px rgba(0,120,215,.4)"></i><span class="T" style="left:1177.90px;top:109px;line-height:12px;font-size:8.4px;color:#000;transform:scaleX(0.8537);transform-origin:0 50%;">Find Next</span><i class="bx" style="left:1243.20px;top:110.20px;width:8.60px;height:8.80px;background:#f3f3f3;border:1px solid #333"></i><i class="bx" style="left:1072.10px;top:124.30px;width:169.30px;height:19.30px;border:1px solid #d4d4d4"></i><i class="bx" style="left:1080.00px;top:129.20px;width:8.60px;height:8.60px;background:#f3f3f3;border:1px solid #c4c4c4"></i><span class="T" style="left:1090.80px;top:128px;line-height:12px;font-size:8.4px;color:#7a7a7a;transform:scaleX(0.8566);transform-origin:0 50%;">In select<u>i</u>on</span><i class="bx" style="left:1148.80px;top:126.70px;width:89.90px;height:14.00px;background:#d9d9d9;border:1px solid #b9b9b9"></i><span class="T" style="left:1184.00px;top:128px;line-height:12px;font-size:8.4px;color:#000;transform:scaleX(0.8721);transform-origin:0 50%;">Coun<u>t</u></span><i class="bx" style="left:1148.80px;top:146.50px;width:89.90px;height:20.40px;background:#d9d9d9;border:1px solid #b9b9b9"></i><span class="T" style="left:1160.10px;top:147px;line-height:12px;font-size:8.4px;color:#000;transform:scaleX(0.8314);transform-origin:0 50%;">Find All in All <u>O</u>pened</span><span class="T" style="left:1174.80px;top:155px;line-height:12px;font-size:8.4px;color:#000;transform:scaleX(0.8404);transform-origin:0 50%;">Documents</span><i class="bx" style="left:1148.80px;top:172.20px;width:89.90px;height:20.70px;background:#d9d9d9;border:1px solid #b9b9b9"></i><span class="T" style="left:1164.90px;top:173px;line-height:12px;font-size:8.4px;color:#000;transform:scaleX(0.8578);transform-origin:0 50%;">Find All in Current</span><span class="T" style="left:1177.10px;top:181px;line-height:12px;font-size:8.4px;color:#000;transform:scaleX(0.8436);transform-origin:0 50%;"><u>D</u>ocument</span><i class="bx" style="left:1148.80px;top:198.00px;width:89.90px;height:13.70px;background:#d9d9d9;border:1px solid #b9b9b9"></i><span class="T" style="left:1184.30px;top:199px;line-height:12px;font-size:8.4px;color:#000;transform:scaleX(0.8123);transform-origin:0 50%;">Close</span><i class="bx" style="left:892.20px;top:170.70px;width:8.60px;height:8.60px;background:#f6f6f6;border:1px solid #333"></i><span class="T" style="left:902.70px;top:169px;line-height:12px;font-size:8.4px;color:#000;transform:scaleX(0.8394);transform-origin:0 50%;">Backward direction</span><i class="bx" style="left:892.20px;top:183.50px;width:8.60px;height:8.60px;background:#f6f6f6;border:1px solid #333"></i><span class="T" style="left:902.70px;top:182px;line-height:12px;font-size:8.4px;color:#000;transform:scaleX(0.8569);transform-origin:0 50%;">Match <u>w</u>hole word only</span><i class="bx" style="left:892.20px;top:196.60px;width:8.60px;height:8.60px;background:#f6f6f6;border:1px solid #333"></i><span class="T" style="left:902.70px;top:195px;line-height:12px;font-size:8.4px;color:#000;transform:scaleX(0.8266);transform-origin:0 50%;">Match <u>c</u>ase</span><i class="bx" style="left:892.20px;top:209.50px;width:8.60px;height:8.60px;background:#f6f6f6;border:1px solid #333"></i><svg class="ic" style="left:892.20px;top:209.50px;width:8.6px;height:8.6px" viewBox="0 0 13 13"><path d="M2.6 6.6l2.8 2.8 5-6" fill="none" stroke="#111" stroke-width="1.9"/></svg><span class="T" style="left:902.70px;top:208px;line-height:12px;font-size:8.4px;color:#000;transform:scaleX(0.8640);transform-origin:0 50%;">Wra<u>p</u> around</span><i class="bx" style="left:886.10px;top:230.80px;width:159.10px;height:46.40px;border:1px solid #d4d4d4"></i><i class="bx" style="left:890.60px;top:226.00px;width:43.80px;height:10.00px;background:#f3f3f3"></i><span class="T" style="left:891.90px;top:225px;line-height:12px;font-size:8.4px;color:#000;transform:scaleX(0.8271);transform-origin:0 50%;">Search Mode</span><i class="bx" style="left:892.10px;top:240.00px;width:8.8px;height:8.8px;border-radius:50%;background:#f6f6f6;border:1px solid #333"></i><i class="bx" style="left:894.20px;top:242.10px;width:4.6px;height:4.6px;border-radius:50%;background:#222"></i><span class="T" style="left:902.70px;top:239px;line-height:12px;font-size:8.4px;color:#000;transform:scaleX(0.7963);transform-origin:0 50%;"><u>N</u>ormal</span><i class="bx" style="left:892.10px;top:253.30px;width:8.8px;height:8.8px;border-radius:50%;background:#f6f6f6;border:1px solid #333"></i><span class="T" style="left:902.70px;top:252px;line-height:12px;font-size:8.4px;color:#000;transform:scaleX(0.9647);transform-origin:0 50%;">E<u>x</u>tended (\n, \r, \t, \0, \x...)</span><i class="bx" style="left:892.10px;top:266.10px;width:8.8px;height:8.8px;border-radius:50%;background:#f6f6f6;border:1px solid #333"></i><span class="T" style="left:902.70px;top:265px;line-height:12px;font-size:8.4px;color:#000;transform:scaleX(0.8438);transform-origin:0 50%;">Re<u>g</u>ular expression</span><i class="bx" style="left:973.40px;top:266.30px;width:8.60px;height:8.60px;background:#f6f6f6;border:1px solid #c4c4c4"></i><span class="T" style="left:984.30px;top:265px;line-height:12px;font-size:8.4px;color:#7a7a7a;transform:scaleX(0.8472);transform-origin:0 50%;"><u>.</u> matches newline</span><i class="bx" style="left:1138.20px;top:230.40px;width:98.80px;height:47.20px;border:1px solid #d4d4d4"></i><i class="bx" style="left:1133.00px;top:226.00px;width:81.00px;height:10.50px;background:#f3f3f3"></i><i class="bx" style="left:1134.10px;top:227.20px;width:8.60px;height:8.60px;background:#f6f6f6;border:1px solid #333"></i><svg class="ic" style="left:1134.10px;top:227.20px;width:8.6px;height:8.6px" viewBox="0 0 13 13"><path d="M2.6 6.6l2.8 2.8 5-6" fill="none" stroke="#111" stroke-width="1.9"/></svg><span class="T" style="left:1144.90px;top:226px;line-height:12px;font-size:8.4px;color:#000;transform:scaleX(0.8525);transform-origin:0 50%;">Transparenc<u>y</u></span><i class="bx" style="left:1148.00px;top:240.00px;width:8.8px;height:8.8px;border-radius:50%;background:#f6f6f6;border:1px solid #333"></i><i class="bx" style="left:1150.10px;top:242.10px;width:4.6px;height:4.6px;border-radius:50%;background:#222"></i><span class="T" style="left:1158.80px;top:239px;line-height:12px;font-size:8.4px;color:#000;transform:scaleX(0.8314);transform-origin:0 50%;">On losing focus</span><i class="bx" style="left:1148.00px;top:253.20px;width:8.8px;height:8.8px;border-radius:50%;background:#f6f6f6;border:1px solid #333"></i><span class="T" style="left:1158.80px;top:252px;line-height:12px;font-size:8.4px;color:#000;transform:scaleX(0.8330);transform-origin:0 50%;">Always</span><i class="bx" style="left:1148.60px;top:268.00px;width:78.80px;height:2.60px;background:#dedede;border:1px solid #d0d0d0"></i><i class="bx" style="left:1203.10px;top:265.80px;width:3.10px;height:6.20px;background:#0a64c8"></i><svg class="ic" style="left:1254px;top:293px;width:7px;height:7px" viewBox="0 0 7 7"><path d="M6 1v1M6 3v1M4 3v1M6 5v1M4 5v1M2 5v1" stroke="#bdbdbd" stroke-width="1"/></svg>
</div>
<div id="statusbar"></div>
<span class="T" style="left:1.70px;top:680px;line-height:12px;font-size:8.4px;color:#000;transform:scaleX(0.9393);transform-origin:0 50%;">eXtensible Markup Language file</span><span class="T" style="left:789.40px;top:680px;line-height:12px;font-size:8.4px;color:#000;transform:scaleX(0.9096);transform-origin:0 50%;">length : 5,101,383</span><span class="T" style="left:858.10px;top:680px;line-height:12px;font-size:8.4px;color:#000;transform:scaleX(0.8838);transform-origin:0 50%;">lines : 118,155</span><span class="T" style="left:922.70px;top:680px;line-height:12px;font-size:8.4px;color:#000;transform:scaleX(0.8826);transform-origin:0 50%;">Ln : 10,605</span><span class="T" style="left:967.80px;top:680px;line-height:12px;font-size:8.4px;color:#000;transform:scaleX(0.8970);transform-origin:0 50%;">Col : 57</span><span class="T" style="left:1001.70px;top:680px;line-height:12px;font-size:8.4px;color:#000;transform:scaleX(0.8373);transform-origin:0 50%;">Sel : 52 | 1</span><span class="T" style="left:1096.10px;top:680px;line-height:12px;font-size:8.4px;color:#000;transform:scaleX(0.9080);transform-origin:0 50%;">Windows (CR LF)</span><span class="T" style="left:1169.80px;top:680px;line-height:12px;font-size:8.4px;color:#000;transform:scaleX(0.8553);transform-origin:0 50%;">UTF-8</span><span class="T" style="left:1250.50px;top:680px;line-height:12px;font-size:8.4px;color:#000;transform:scaleX(0.8304);transform-origin:0 50%;">INS</span><i class="ssep" style="left:785.6px"></i><i class="ssep" style="left:918.5px"></i><i class="ssep" style="left:1092.5px"></i><i class="ssep" style="left:1166.5px"></i><i class="ssep" style="left:1247.0px"></i>
</body></html>
